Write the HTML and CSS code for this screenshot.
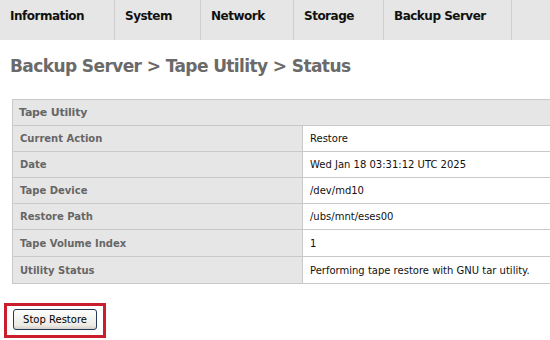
FILE: index.html
```html
<!DOCTYPE html>
<html>

<head>
	<meta charset="utf-8">
	<title>Backup Server - Tape Utility - Status</title>
	<meta name="viewport" content="width=device-width, initial-scale=1">
	<link rel="stylesheet" href="styles.css">
</head>

<body>
	<nav class='menu'>
		<a class='menu__item'>Information</a>
		<a class='menu__item'>System</a>
		<a class='menu__item'>Network</a>
		<a class='menu__item'>Storage</a>
		<a class='menu__item'>Backup Server</a>
		<span class='menu__item'></span>
	</nav>

	<h1 class='page__hed'>Backup Server &gt; Tape Utility &gt; Status</h1>

	<table class='info'>
		<tr>
			<th class='info__title' colspan='2'>Tape Utility</th>
		</tr>
		<tr>
			<th>Current Action</th>
			<td>Restore</td>
		</tr>
		<tr>
			<th>Date</th>
			<td>Wed Jan 18 03:31:12 UTC 2025</td>
		</tr>
		<tr>
			<th>Tape Device</th>
			<td>/dev/md10</td>
		</tr>
		<tr>
			<th>Restore Path</th>
			<td>/ubs/mnt/eses00</td>
		</tr>
		<tr>
			<th>Tape Volume Index</th>
			<td>1</td>
		</tr>
		<tr>
			<th>Utility Status</th>
			<td>Performing tape restore with GNU tar utility.</td>
		</tr>
	</table>

	<div class='actions'>
		<button class='btn' type='button'>Stop Restore</button>
	</div>
</body>

</html>
```

FILE: styles.css
```css
/* page */

* {
	box-sizing: border-box;
}

html,
body {
	margin: 0;
	padding: 0;
	overflow: hidden;
	font-family: 'DejaVu Sans', Verdana, sans-serif;
	background: #fff;
	color: #000;
}

/* top menu */

.menu {
	display: grid;
	grid-template-columns: 115px 86px 93px 90px 128px 1fr;
	height: 40px;
	background: #e6e6e6;
}

.menu__item {
	padding: 9px 0 0 10px;
	border-right: 1px solid #cfcfcf;
	font-size: 12px;
	letter-spacing: -0.5px;
	font-weight: bold;
	color: #111;
	white-space: nowrap;
}

.menu__item:last-child {
	border-right: 0;
}

/* heading */

.page__hed {
	margin: 14px 0 0 10px;
	font-size: 17px;
	line-height: 24px;
	letter-spacing: -0.6px;
	font-weight: bold;
	color: #6a6a6a;
}

/* status table */

.info {
	margin: 21px 0 0 12px;
	width: 560px;
	border-collapse: collapse;
	font-size: 10px;
}

.info th,
.info td {
	height: 26px;
	padding: 0 7px;
	border: 1px solid #c9c9c9;
	text-align: left;
	white-space: nowrap;
}

.info tr:nth-child(n+6) th,
.info tr:nth-child(n+6) td {
	height: 27px;
}

.info th {
	width: 290px;
	background: #e6e6e6;
	color: #666;
	font-weight: bold;
}

.info .info__title {
	padding-left: 6px;
	font-size: 11px;
	letter-spacing: -0.2px;
}

.info td {
	background: #fff;
	color: #111;
}

/* button */

.actions {
	display: inline-block;
	margin: 19px 0 0 4px;
	padding: 3px 6px 5px 6px;
	border: 3px solid #c81e2e;
}

.btn {
	display: block;
	width: 84px;
	height: 21px;
	padding: 0;
	border: 1px solid #24395a;
	border-radius: 3px;
	background: linear-gradient(#fdfdfb, #ecebe5 80%, #d6d0c5);
	font-family: 'DejaVu Sans', Verdana, sans-serif;
	font-size: 10px;
	color: #000;
}
```
